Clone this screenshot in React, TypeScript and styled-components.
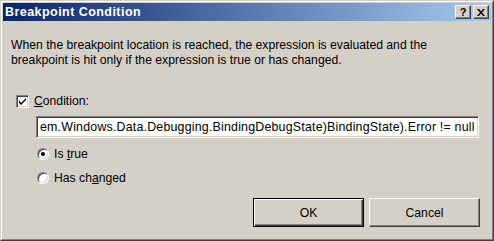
import * as React from 'react';
import styled, { createGlobalStyle } from 'styled-components';

const GlobalStyle = createGlobalStyle`
    html, body {
        margin: 0;
        padding: 0;
        background: #d4d0c8;
    }
    body {
        font-family: "Liberation Sans", Arial, sans-serif;
        font-size: 12.2px;
        color: #000;
    }
`;

const Window = styled.div`
    width: 494px;
    height: 241px;
    box-sizing: border-box;
    background: #d4d0c8;
    border-top: 1px solid #d4d0c8;
    border-left: 1px solid #d4d0c8;
    border-right: 1px solid #404040;
    border-bottom: 1px solid #404040;
    display: flex;
    flex-direction: column;
`;

const Frame = styled.div`
    flex: 1;
    display: flex;
    flex-direction: column;
    border-top: 1px solid #fff;
    border-left: 1px solid #fff;
    border-right: 1px solid #808080;
    border-bottom: 1px solid #808080;
    padding: 1px;
`;

const TitleBar = styled.div`
    height: 18px;
    display: flex;
    align-items: center;
    justify-content: space-between;
    padding: 0 2px 0 2px;
    background: linear-gradient(to right, #0a246a, #a6caf0);
`;

const TitleText = styled.span`
    color: #fff;
    font-weight: bold;
    font-size: 12.5px;
    letter-spacing: 0.45px;
`;

const TitleButtons = styled.div`
    display: flex;
    gap: 2px;
`;

const CaptionButton = styled.div`
    width: 16px;
    height: 14px;
    box-sizing: border-box;
    background: #d4d0c8;
    border-top: 1px solid #fff;
    border-left: 1px solid #fff;
    border-right: 1px solid #404040;
    border-bottom: 1px solid #404040;
    box-shadow: inset -1px -1px 0 #808080;
    display: flex;
    align-items: center;
    justify-content: center;
    font-weight: bold;
    font-size: 11px;
    line-height: 1;
`;

const Body = styled.div`
    flex: 1;
    display: flex;
    flex-direction: column;
    padding: 17px 10px 10px 8px;
`;

const Message = styled.p`
    margin: 0;
    line-height: 15px;
`;

const CheckRow = styled.label`
    display: flex;
    align-items: center;
    gap: 5px;
    margin: 26px 0 0 5px;
    height: 14px;
`;

const CheckBox = styled.span`
    width: 13px;
    height: 13px;
    box-sizing: border-box;
    background: #fff;
    border-top: 1px solid #808080;
    border-left: 1px solid #808080;
    border-right: 1px solid #fff;
    border-bottom: 1px solid #fff;
    box-shadow: inset 1px 1px 0 #404040, inset -1px -1px 0 #d4d0c8;
    display: flex;
    align-items: center;
    justify-content: center;
`;

const Mnemonic = styled.span`
    text-decoration: underline;
`;

const ExprBox = styled.div`
    margin: 8px 0 0 25px;
    height: 22px;
    width: 443px;
    box-sizing: border-box;
    background: #fff;
    border-top: 1px solid #808080;
    border-left: 1px solid #808080;
    border-right: 1px solid #fff;
    border-bottom: 1px solid #fff;
    box-shadow: inset 1px 1px 0 #404040, inset -1px -1px 0 #d4d0c8;
    display: flex;
    align-items: center;
    overflow: hidden;
    white-space: nowrap;
    padding-left: 3px;
    font-size: 12.4px;
    letter-spacing: 0.2px;
`;

const RadioGroup = styled.div`
    display: flex;
    flex-direction: column;
    gap: 10px;
    margin: 9px 0 0 26px;
`;

const RadioRow = styled.label`
    display: flex;
    align-items: center;
    gap: 5px;
    height: 14px;
`;

const RadioDot = styled.span<{ $on?: boolean }>`
    width: 12px;
    height: 12px;
    box-sizing: border-box;
    border-radius: 50%;
    background: #fff;
    border: 1px solid;
    border-color: #808080 #fff #fff #808080;
    box-shadow: inset 1px 1px 0 #404040, inset -1px -1px 0 #d4d0c8;
    display: flex;
    align-items: center;
    justify-content: center;
    &::after {
        content: '';
        width: 4px;
        height: 4px;
        border-radius: 50%;
        background: ${p => (p.$on ? '#000' : 'transparent')};
    }
`;

const ButtonRow = styled.div`
    margin-top: auto;
    display: flex;
    justify-content: flex-end;
    gap: 5px;
    padding: 0 1px 1px 0;
`;

const Button = styled.div<{ $default?: boolean }>`
    width: 111px;
    height: 29px;
    box-sizing: border-box;
    background: #d4d0c8;
    display: flex;
    align-items: center;
    justify-content: center;
    border: 1px solid;
    border-color: ${p => (p.$default ? '#000' : '#fff #404040 #404040 #fff')};
    box-shadow: ${p =>
        p.$default
            ? 'inset 1px 1px 0 #fff, inset -1px -1px 0 #404040, inset -2px -2px 0 #808080'
            : 'inset -1px -1px 0 #808080'};
`;

export default function App() {
    return (
        <>
            <GlobalStyle />
            <Window>
                <Frame>
                    <TitleBar>
                        <TitleText>Breakpoint Condition</TitleText>
                        <TitleButtons>
                            <CaptionButton>?</CaptionButton>
                            <CaptionButton>
                                <svg width="8" height="7" viewBox="0 0 8 7">
                                    <path d="M0 0h2l2 2.5L6 0h2L5 3.5 8 7H6L4 4.5 2 7H0l3-3.5z" fill="#000" />
                                </svg>
                            </CaptionButton>
                        </TitleButtons>
                    </TitleBar>
                    <Body>
                        <Message>
                            When the breakpoint location is reached, the expression is evaluated and the
                            <br />
                            breakpoint is hit only if the expression is true or has changed.
                        </Message>
                        <CheckRow>
                            <CheckBox>
                                <svg width="7" height="7" viewBox="0 0 7 7">
                                    <path d="M0 2v3l2 2 5-5V0L2 5z" fill="#000" />
                                </svg>
                            </CheckBox>
                            <span>
                                <Mnemonic>C</Mnemonic>ondition:
                            </span>
                        </CheckRow>
                        <ExprBox>em.Windows.Data.Debugging.BindingDebugState)BindingState).Error != null</ExprBox>
                        <RadioGroup>
                            <RadioRow>
                                <RadioDot $on />
                                <span>
                                    Is <Mnemonic>t</Mnemonic>rue
                                </span>
                            </RadioRow>
                            <RadioRow>
                                <RadioDot />
                                <span>
                                    Has ch<Mnemonic>a</Mnemonic>nged
                                </span>
                            </RadioRow>
                        </RadioGroup>
                        <ButtonRow>
                            <Button $default>OK</Button>
                            <Button>Cancel</Button>
                        </ButtonRow>
                    </Body>
                </Frame>
            </Window>
        </>
    );
}
